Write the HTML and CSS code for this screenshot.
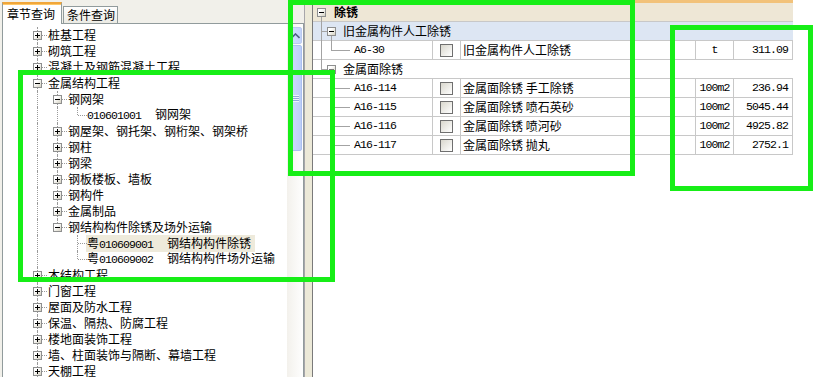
FILE: index.html
```html
<!DOCTYPE html>
<html lang="zh">
<head>
<meta charset="utf-8">
<title>章节查询</title>
<link rel="stylesheet" href="styles.css">
</head>
<body>
<div class="app">
  <div class="left">
    <div class="tabs">
      <div class="tab active">章节查询</div>
      <div class="tab">条件查询</div>
    </div>
    <div class="treebox">
      <div class="tree">
        <div class="r"><i class="c v"><b class="bx plus"></b></i><span class="t">桩基工程</span></div>
        <div class="r"><i class="c v"><b class="bx plus"></b></i><span class="t">砌筑工程</span></div>
        <div class="r"><i class="c v"><b class="bx plus"></b></i><span class="t">混凝土及钢筋混凝土工程</span></div>
        <div class="r"><i class="c v"><b class="bx minus"></b></i><span class="t">金属结构工程</span></div>
        <div class="r"><i class="g v"></i><i class="c v"><b class="bx minus"></b></i><span class="t">钢网架</span></div>
        <div class="r"><i class="g v"></i><i class="g v"></i><i class="c h"></i><span class="t leaf"><span class="mono">010601001</span><span class="nm2">钢网架</span></span></div>
        <div class="r"><i class="g v"></i><i class="c v"><b class="bx plus"></b></i><span class="t">钢屋架、钢托架、钢桁架、钢架桥</span></div>
        <div class="r"><i class="g v"></i><i class="c v"><b class="bx plus"></b></i><span class="t">钢柱</span></div>
        <div class="r"><i class="g v"></i><i class="c v"><b class="bx plus"></b></i><span class="t">钢梁</span></div>
        <div class="r"><i class="g v"></i><i class="c v"><b class="bx plus"></b></i><span class="t">钢板楼板、墙板</span></div>
        <div class="r"><i class="g v"></i><i class="c v"><b class="bx plus"></b></i><span class="t">钢构件</span></div>
        <div class="r"><i class="g v"></i><i class="c v"><b class="bx plus"></b></i><span class="t">金属制品</span></div>
        <div class="r"><i class="g v"></i><i class="c h"><b class="bx minus"></b></i><span class="t">钢结构构件除锈及场外运输</span></div>
        <div class="r"><i class="g v"></i><i class="g"></i><i class="c v"></i><span class="t leaf sel">粤<span class="mono">010609001</span><span class="nm2">钢结构构件除锈</span></span></div>
        <div class="r"><i class="g v"></i><i class="g"></i><i class="c h"></i><span class="t leaf">粤<span class="mono">010609002</span><span class="nm2">钢结构构件场外运输</span></span></div>
        <div class="r"><i class="c v"><b class="bx plus"></b></i><span class="t">木结构工程</span></div>
        <div class="r"><i class="c v"><b class="bx plus"></b></i><span class="t">门窗工程</span></div>
        <div class="r"><i class="c v"><b class="bx plus"></b></i><span class="t">屋面及防水工程</span></div>
        <div class="r"><i class="c v"><b class="bx plus"></b></i><span class="t">保温、隔热、防腐工程</span></div>
        <div class="r"><i class="c v"><b class="bx plus"></b></i><span class="t">楼地面装饰工程</span></div>
        <div class="r"><i class="c v"><b class="bx plus"></b></i><span class="t">墙、柱面装饰与隔断、幕墙工程</span></div>
        <div class="r"><i class="c v"><b class="bx plus"></b></i><span class="t">天棚工程</span></div>
      </div>
      <div class="vscroll">
        <div class="sbtn"><svg width="9" height="6" viewBox="0 0 9 6"><path d="M0.5 5 L4.5 1 L8.5 5" fill="none" stroke="#4d6185" stroke-width="1.6"/></svg></div>
        <div class="thumb"><span class="grip"></span></div>
      </div>
    </div>
  </div>
  <div class="splitter"></div>
  <div class="right">
    <div class="grid">
      <div class="gr head"><div class="tc"><i class="ln v8b"></i><b class="gbx"></b><span class="gt">除锈</span></div></div>
      <div class="gr grp sel1"><div class="tc"><i class="ln v8"></i><i class="ln h8"></i><i class="ln v18b"></i><b class="gbx sub"></b><span class="gt">旧金属构件人工除锈</span></div></div>
      <div class="gr item"><div class="tc"><i class="ln v8"></i><i class="ln v18t"></i><i class="ln h18"></i><span class="code">A6-30</span></div><div class="ck"><i></i></div><div class="nm">旧金属构件人工除锈</div><div class="un">t</div><div class="vl">311.09</div></div>
      <div class="gr grp"><div class="tc"><i class="ln v8t"></i><i class="ln h8"></i><i class="ln v18b"></i><b class="gbx sub dim"></b><span class="gt">金属面除锈</span></div></div>
      <div class="gr item"><div class="tc"><i class="ln v18"></i><i class="ln h18"></i><span class="code">A16-114</span></div><div class="ck"><i></i></div><div class="nm">金属面除锈 手工除锈</div><div class="un">100m2</div><div class="vl">236.94</div></div>
      <div class="gr item"><div class="tc"><i class="ln v18"></i><i class="ln h18"></i><span class="code">A16-115</span></div><div class="ck"><i></i></div><div class="nm">金属面除锈 喷石英砂</div><div class="un">100m2</div><div class="vl">5045.44</div></div>
      <div class="gr item"><div class="tc"><i class="ln v18"></i><i class="ln h18"></i><span class="code">A16-116</span></div><div class="ck"><i></i></div><div class="nm">金属面除锈 喷河砂</div><div class="un">100m2</div><div class="vl">4925.82</div></div>
      <div class="gr item"><div class="tc"><i class="ln v18t"></i><i class="ln h18"></i><span class="code">A16-117</span></div><div class="ck"><i></i></div><div class="nm">金属面除锈 抛丸</div><div class="un">100m2</div><div class="vl">2752.1</div></div>
    </div>
  </div>
  <div class="mark m1"></div>
  <div class="mark m2"></div>
  <div class="mark m3"></div>
</div>
</body>
</html>
```

FILE: styles.css
```css
* { box-sizing: border-box; margin: 0; padding: 0; }
html, body { width: 826px; height: 377px; overflow: hidden; }
body {
  background: #ece9d8;
  font-family: "Noto Sans CJK SC", "Noto Sans", sans-serif;
  font-size: 12px;
  color: #000;
}
.app { position: relative; display: flex; width: 826px; height: 377px; overflow: hidden; }

/* ---------- left panel ---------- */
.left { width: 304px; display: flex; flex-direction: column; background: #f1f0ea; }
.tabs { height: 23px; display: flex; align-items: flex-end; padding-left: 2px; gap: 1px; position: relative; z-index: 2; }
.tab {
  height: 17px; width: 55px; padding-left: 3px;
  border: 1px solid #919b9c; border-bottom: 0;
  background: linear-gradient(#fefefe, #ecebe4);
  line-height: 16px; white-space: nowrap;
}
.tab.active {
  height: 22px; width: 60px; margin-bottom: -1px; padding-left: 4px;
  background: #fff; border-top: 2px solid #f0a63a;
  line-height: 20px;
  box-shadow: inset 0 1px 0 #ffc867;
}
.treebox { flex: 1; margin-left: 2px; border: 1px solid #919b9c; border-bottom: 0; background: #fff; display: flex; overflow: hidden; }
.tree { flex: 1; padding-top: 3px; padding-left: 24px; overflow: hidden; }
.r { height: 16px; display: flex; align-items: center; white-space: nowrap; line-height: 16px; }
.g, .c { position: relative; width: 20px; height: 16px; flex: none; display: block; }
.g.v::before, .c::before {
  content: ""; position: absolute; left: 10px; top: 0; bottom: 0;
  border-left: 1px dotted #9a9a9a;
}
.c.h::before { bottom: 8px; }
.c::after {
  content: ""; position: absolute; left: 11px; width: 9px; top: 8px;
  border-top: 1px dotted #9a9a9a;
}
.bx, .gbx {
  position: absolute; left: 6px; top: 4px; width: 9px; height: 9px; z-index: 1;
  border: 1px solid #8e8f8f;
  background: linear-gradient(135deg, #ffffff 30%, #d6d2c2);
}
.bx::before, .gbx::before { content: ""; position: absolute; left: 1px; top: 3px; width: 5px; height: 1px; background: #000; }
.bx.plus::after { content: ""; position: absolute; left: 3px; top: 1px; width: 1px; height: 5px; background: #000; }
.t { margin-left: 1px; }
.leaf { margin-left: 0; }
.mono { font-family: "Liberation Mono", monospace; font-size: 11.5px; letter-spacing: -0.9px; }
.nm2 { margin-left: 14px; }
.sel { background: #eeeadb; padding: 0 4px 0 1px; margin-left: -1px; line-height: 15px; }

.vscroll { width: 16px; flex: none; display: flex; flex-direction: column; background: linear-gradient(90deg, #f3f1ec, #fefefe); }
.sbtn {
  height: 17px; margin: 3px 1px 0; border: 1px solid #b9c9ef; border-radius: 2px;
  background: linear-gradient(90deg, #d6e2fc, #c2d3fa);
  display: flex; align-items: center; justify-content: center;
}
.thumb {
  height: 106px; margin: 1px 1px 0; border: 1px solid #aabff0; border-radius: 2px;
  background: linear-gradient(90deg, #d0ddfc, #bccef8);
  display: flex; align-items: center; justify-content: center;
}
.grip { width: 7px; height: 7px; background: repeating-linear-gradient(#eef3fe 0 1px, #8fa6dc 1px 2px); }

.splitter { width: 8px; flex: none; background: #ece9d8; border-left: 1px solid #a7a6aa; }

/* ---------- right panel ---------- */
.right { flex: 1; background: #fff; border-left: 1px solid #7a7a7a; }
.grid { width: 480px; border-top: 3px solid #f2c27a; }
.gr { height: 19px; display: flex; border-bottom: 1px solid #c8c8c8; line-height: 18px; white-space: nowrap; }
.head { background: #eee7d6; }
.sel1 { background: #dde6f3; }
.tc { position: relative; width: 119px; flex: none; }
.head .tc, .grp .tc { width: 100%; }
.head .gbx { left: 4px; top: 5px; }
.head .gt { position: absolute; left: 21px; font-weight: bold; }
.gbx.sub { left: 14px; top: 5px; }
.gbx.dim::before { background: #7a7a7a; }
.grp .gt { position: absolute; left: 30px; }
.ln { position: absolute; display: block; background: #a3a3a3; }
.v8b { left: 8px; top: 13px; bottom: -1px; width: 1px; }
.v8 { left: 8px; top: 0; bottom: -1px; width: 1px; }
.v8t { left: 8px; top: 0; height: 9px; width: 1px; }
.h8 { left: 8px; width: 6px; top: 9px; height: 1px; }
.v18b { left: 18px; top: 13px; bottom: -1px; width: 1px; }
.v18 { left: 18px; top: 0; bottom: -1px; width: 1px; }
.v18t { left: 18px; top: 0; height: 9px; width: 1px; }
.h18 { left: 18px; width: 19px; top: 9px; height: 1px; }
.code {
  position: absolute; left: 41px;
  font-family: "Liberation Mono", monospace; font-size: 11.5px; letter-spacing: -0.9px;
}
.ck { width: 28px; flex: none; border-left: 1px solid #c8c8c8; display: flex; align-items: center; justify-content: center; }
.ck i {
  display: block; width: 13px; height: 13px;
  border: 1px solid #6f6f6f;
  background: linear-gradient(135deg, #d9d7cd, #ffffff);
}
.nm { width: 235px; flex: none; border-left: 1px solid #c8c8c8; padding-left: 2px; overflow: hidden; }
.un, .vl { flex: none; border-left: 1px solid #c8c8c8; font-family: "Liberation Mono", monospace; font-size: 11.5px; letter-spacing: -0.9px; }
.un { width: 38px; text-align: center; }
.vl { width: 60px; text-align: right; padding-right: 4px; border-right: 1px solid #c8c8c8; }

/* ---------- annotation boxes ---------- */
.mark { position: absolute; border: 5px solid #17ee17; z-index: 5; }
.m1 { left: 288px; top: 0; width: 347px; height: 176px; }
.m2 { left: 18px; top: 70px; width: 317px; height: 212px; }
.m3 { left: 670px; top: 25px; width: 143px; height: 166px; }
```
